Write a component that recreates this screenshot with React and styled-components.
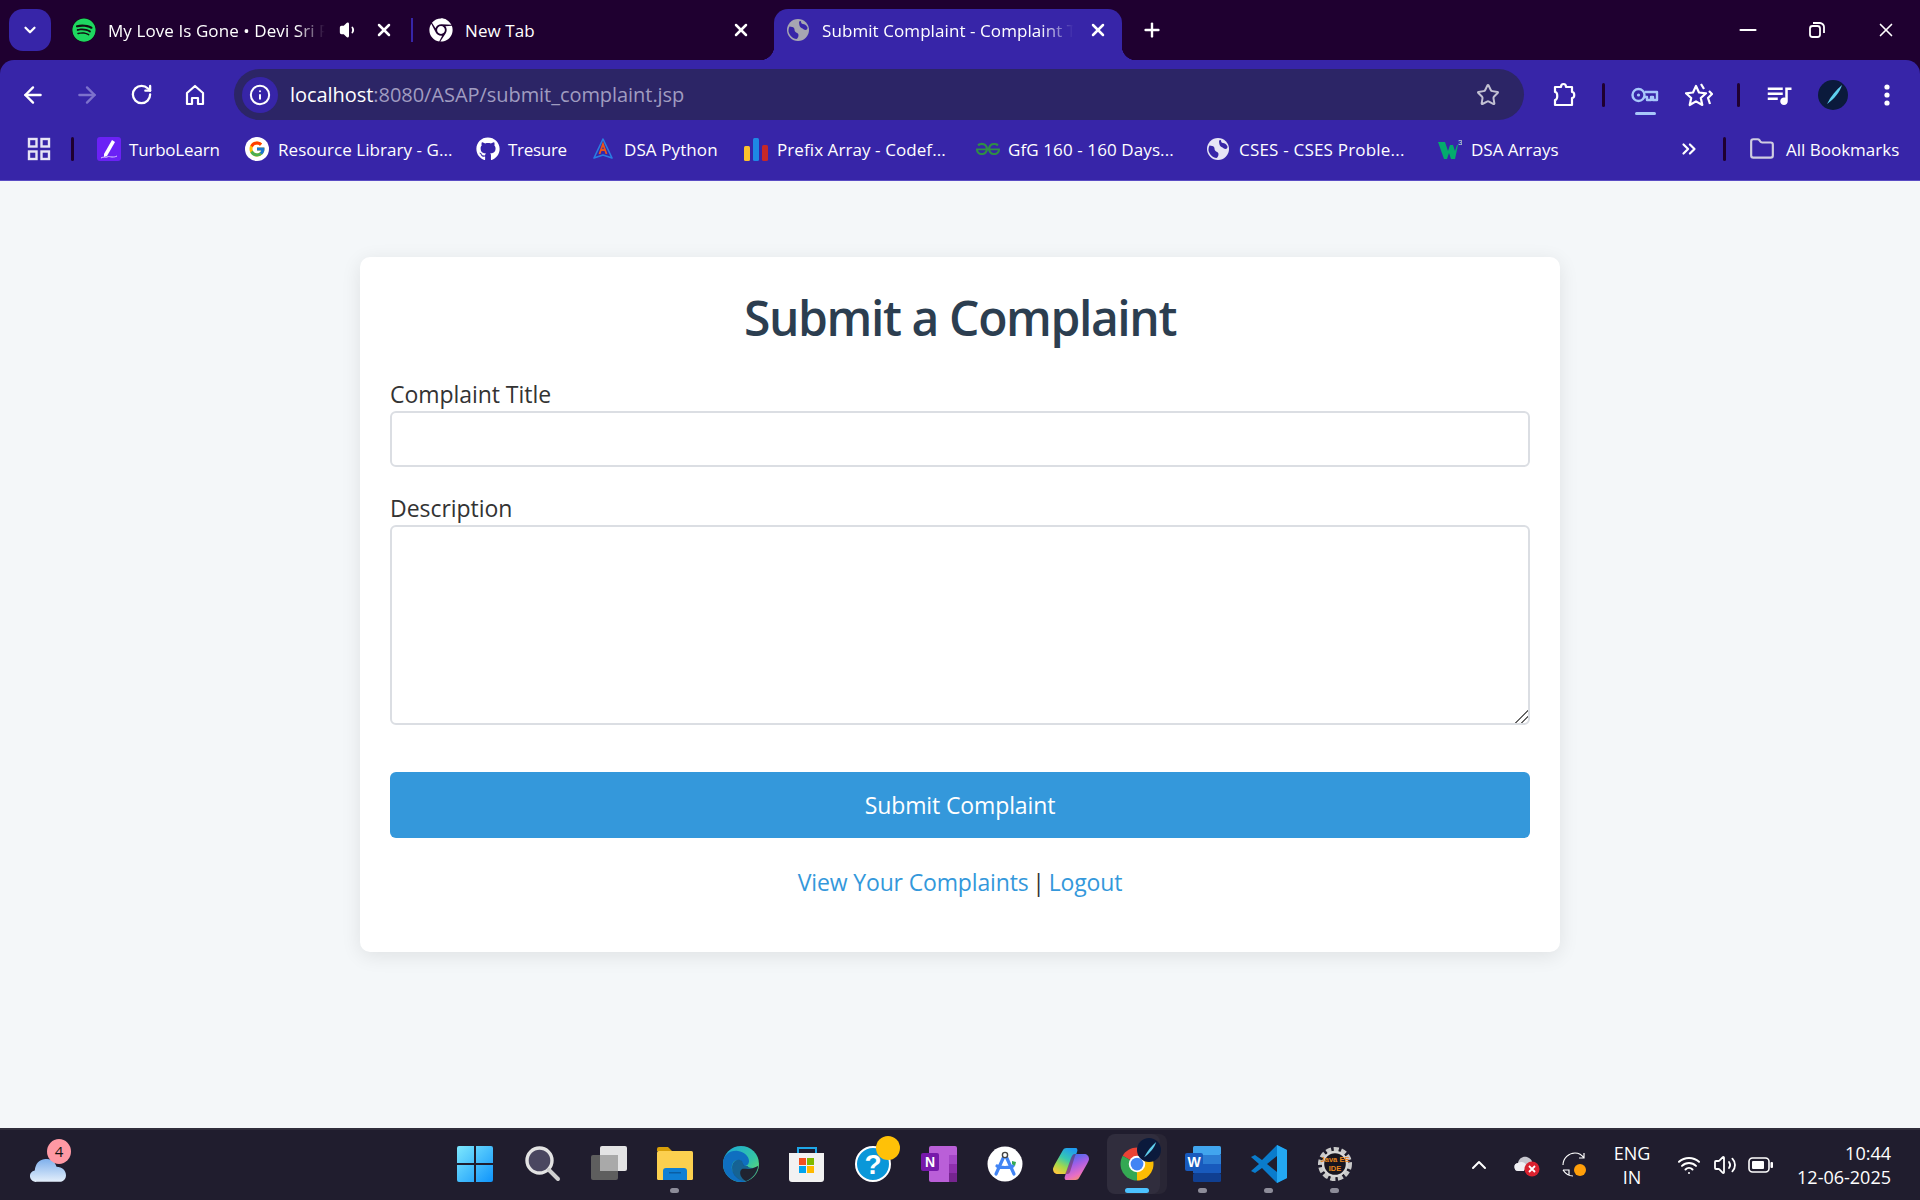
import styled, { createGlobalStyle } from 'styled-components';
import {
  ArrowLeft, ArrowRight, RotateCw, Info, Star, X, Plus, Minus, ChevronDown, ChevronUp,
  ChevronsRight, Folder, Volume1, Volume2, Wifi,
} from 'lucide-react';
import { FaChrome, FaGithub, FaSpotify } from 'react-icons/fa';
import { FcGoogle } from 'react-icons/fc';
import { MdOutlineQueueMusic } from 'react-icons/md';
import { SiGeeksforgeeks } from 'react-icons/si';

const UI_FONT = '"Open Sans", "Noto Sans", sans-serif';

const GlobalStyle = createGlobalStyle`
  * { box-sizing: border-box; }
  html, body { margin: 0; padding: 0; height: 100%; }
  body { font-family: ${UI_FONT}; background: #1f0030; }
`;

const Screen = styled.div`
  width: 1920px;
  height: 1200px;
  display: flex;
  flex-direction: column;
  overflow: hidden;
  background: #1f0030;
`;

/* ---------- tab strip ---------- */

const TabStrip = styled.div`
  height: 60px;
  display: flex;
  align-items: flex-end;
  padding-left: 9px;
  color: #fff;
`;

const TabSearch = styled.div`
  width: 42px;
  height: 42px;
  margin: 0 9px 9px 0;
  border-radius: 14px;
  background: #3725a8;
  display: flex;
  align-items: center;
  justify-content: center;
`;

const Tab = styled.div`
  position: relative;
  width: ${(p) => p.$width}px;
  height: 51px;
  margin-right: ${(p) => p.$gap || 0}px;
  padding: 0 ${(p) => p.$right}px 9px ${(p) => p.$left}px;
  display: flex;
  align-items: center;
  gap: 12px;
  border-radius: 14px 14px 0 0;
  background: ${(p) => (p.$active ? '#3725a8' : 'transparent')};

  ${(p) => p.$active && `
    &::before, &::after {
      content: "";
      position: absolute;
      bottom: 0;
      width: 14px;
      height: 14px;
    }
    &::before { left: -14px; background: radial-gradient(circle at 0 0, transparent 14px, #3725a8 14.5px); }
    &::after { right: -14px; background: radial-gradient(circle at 100% 0, transparent 14px, #3725a8 14.5px); }
  `}
`;

const TabTitle = styled.span`
  flex: 1;
  min-width: 0;
  font-size: 17px;
  letter-spacing: 0.08px;
  white-space: nowrap;
  overflow: hidden;
  mask-image: ${(p) => (p.$fade ? 'linear-gradient(to right, #000 86%, transparent 99%)' : 'none')};
`;

const TabDivider = styled.div`
  width: 2px;
  height: 24px;
  margin: 0 1px 18px;
  background: #3725a8;
`;

const NewTab = styled.div`
  width: 24px;
  height: 24px;
  margin: 0 0 18px 18px;
  display: flex;
  align-items: center;
  justify-content: center;
`;

const WindowControls = styled.div`
  margin-left: auto;
  align-self: flex-start;
  display: flex;
`;

const WindowButton = styled.div`
  width: 69px;
  height: 60px;
  display: flex;
  align-items: center;
  justify-content: center;
`;

/* ---------- toolbar ---------- */

const Toolbar = styled.div`
  height: 60px;
  padding: 9px 6px 0;
  display: flex;
  align-items: center;
  background: #3725a8;
  border-radius: 14px 14px 0 0;
  color: #fff;
`;

const ToolButton = styled.div`
  width: 54px;
  height: 51px;
  position: relative;
  flex-shrink: 0;
  display: flex;
  align-items: center;
  justify-content: center;
  color: ${(p) => p.$color || '#fff'};
`;

const KeyUnderline = styled.span`
  position: absolute;
  left: 17px;
  bottom: 5px;
  width: 21px;
  height: 3px;
  border-radius: 2px;
  background: #a8c7fa;
`;

const Omnibox = styled.div`
  width: 1290px;
  height: 51px;
  margin: 0 13px 0 12px;
  padding: 0 24px 0 8px;
  flex-shrink: 0;
  display: flex;
  align-items: center;
  border-radius: 26px;
  background: #2c2566;
`;

const SiteInfo = styled.div`
  width: 36px;
  height: 36px;
  margin-right: 12px;
  border-radius: 50%;
  background: #3725a8;
  display: flex;
  align-items: center;
  justify-content: center;
`;

const Url = styled.div`
  flex: 1;
  font-size: 20px;
  letter-spacing: -0.05px;
  color: #a09cc0;

  b { font-weight: 400; color: #fff; }
`;

const ToolDivider = styled.div`
  width: 3px;
  height: 24px;
  margin: 0 ${(p) => p.$right || 12}px 0 ${(p) => p.$left || 12}px;
  flex-shrink: 0;
  border-radius: 2px;
  background: #1f0030;
`;

const Avatar = styled.div`
  width: ${(p) => p.$size}px;
  height: ${(p) => p.$size}px;
  border-radius: 50%;
  overflow: hidden;
  background: #0b1a3c;
`;

/* ---------- bookmarks ---------- */

const BookmarksBar = styled.div`
  height: 61px;
  padding: 0 0 2px 27px;
  display: flex;
  align-items: center;
  background: #3725a8;
  border-bottom: 1px solid #5a4cc4;
  color: #fff;
`;

const BarDivider = styled.div`
  width: 3px;
  height: 24px;
  margin: 0 ${(p) => p.$right}px 0 ${(p) => p.$left}px;
  flex-shrink: 0;
  border-radius: 2px;
  background: #1f0030;
`;

const Bookmark = styled.div`
  width: ${(p) => p.$width}px;
  flex-shrink: 0;
  display: flex;
  align-items: center;
  gap: ${(p) => p.$gap || 9}px;
  font-size: 17px;
  letter-spacing: ${(p) => p.$spacing || 0}px;
  white-space: nowrap;

  svg { flex-shrink: 0; }
`;

const Overflow = styled.div`
  width: 24px;
  margin-left: 109px;
  flex-shrink: 0;
  display: flex;
  justify-content: center;
`;

/* ---------- page ---------- */

const Page = styled.main`
  flex: 1;
  padding-top: 76px;
  background: #f4f7f9;
`;

const Card = styled.div`
  width: 1200px;
  margin: 0 auto;
  padding: 30px 30px 55px;
  background: #fff;
  border-radius: 10px;
  box-shadow: 0 4px 20px rgba(0, 0, 0, 0.09);
`;

const Heading = styled.h2`
  margin: 0 0 34px;
  font-size: 48px;
  line-height: 62px;
  font-weight: 600;
  text-align: center;
  letter-spacing: -1.4px;
  color: #2c3e50;
`;

const Field = styled.div`
  margin-bottom: ${(p) => p.$gap}px;
`;

const Label = styled.label`
  display: block;
  margin-bottom: 6px;
  font-size: 23px;
  line-height: 22px;
  letter-spacing: -0.05px;
  color: #333;
`;

const TextInput = styled.input`
  display: block;
  width: 100%;
  height: 56px;
  background: #fff;
  border: 2px solid #dbdee3;
  border-radius: 6px;
  outline: none;
`;

const TextArea = styled.textarea`
  display: block;
  width: 100%;
  height: 200px;
  background: #fff;
  border: 2px solid #dbdee3;
  border-radius: 6px;
  outline: none;
  resize: vertical;

  &::-webkit-resizer {
    background: linear-gradient(135deg, transparent 55%, #666 55%, #666 62%, transparent 62%, transparent 75%, #666 75%, #666 82%, transparent 82%);
  }
`;

const SubmitButton = styled.button`
  display: block;
  width: 100%;
  height: 66px;
  border: none;
  border-radius: 6px;
  background: #3498db;
  color: #fff;
  font-family: ${UI_FONT};
  font-size: 23px;
  letter-spacing: -0.12px;
`;

const Links = styled.p`
  margin: 29px 0 0;
  font-size: 23px;
  line-height: 30px;
  text-align: center;
  letter-spacing: -0.15px;
  color: #333;

  a { color: #3498db; text-decoration: none; }
`;

const Pipe = styled.span`
  margin: 0 -2px;
`;

/* ---------- taskbar ---------- */

const Taskbar = styled.footer`
  height: 72px;
  display: flex;
  align-items: center;
  background: #201d2e;
  border-top: 2px solid #302e3c;
  color: #fff;
`;

const Widgets = styled.div`
  width: 442px;
  padding-left: 30px;
  flex-shrink: 0;
`;

const WeatherIcon = styled.div`
  position: relative;
  width: 36px;
  height: 25px;
  margin-top: 8px;
`;

const WeatherBadge = styled.span`
  position: absolute;
  left: 17px;
  top: -18px;
  width: 24px;
  height: 25px;
  border-radius: 50%;
  background: #ff99a4;
  color: #111;
  font-size: 15px;
  line-height: 25px;
  text-align: center;
`;

const TaskIcons = styled.div`
  display: flex;
  align-items: center;
`;

const TaskSlot = styled.div`
  position: relative;
  isolation: isolate;
  width: 66px;
  height: 60px;
  margin-bottom: 2px;
  display: flex;
  align-items: center;
  justify-content: center;

  &:first-child { margin-right: 2px; }

  ${(p) => p.$active && `
    &::before, &::after {
      content: "";
      position: absolute;
      top: 0;
      bottom: 0;
      width: 53px;
      border-radius: 8px;
    }
    &::before { left: 3px; background: #302d3d; z-index: -1; }
    &::after { left: 10px; background: #292635; z-index: -2; }
  `}
`;

const RunDot = styled.span`
  position: absolute;
  bottom: 1px;
  left: 50%;
  width: ${(p) => (p.$active ? 24 : 9)}px;
  height: 5px;
  margin-left: ${(p) => (p.$active ? -12 : -5)}px;
  border-radius: 3px;
  background: ${(p) => (p.$active ? '#4cc2ff' : '#8d8c99')};
`;

const SlotBadge = styled.div`
  position: absolute;
  left: ${(p) => p.$left}px;
  top: ${(p) => p.$top}px;
`;

const Dot = styled.div`
  width: 24px;
  height: 24px;
  border-radius: 50%;
  background: #ffc107;
`;

const Tray = styled.div`
  margin-left: auto;
  padding-right: 29px;
  display: flex;
  align-items: center;
`;

const TrayIcon = styled.div`
  width: ${(p) => p.$width}px;
  flex-shrink: 0;
  display: flex;
  justify-content: center;
`;

const TrayText = styled.div`
  width: ${(p) => p.$width}px;
  font-size: 18px;
  line-height: 24px;
  text-align: ${(p) => p.$align};
  white-space: nowrap;
`;

/* ---------- drawn icons ---------- */

const Globe = ({ color = '#a6a6b2', cut = '#3725a8', size = 24 }) => (
  <svg width={size} height={size} viewBox="0 0 24 24">
    <circle cx="12" cy="12" r="11" fill={color} />
    <path d="M3.500 8.500c2 .5 3.500 0 4.500 1.500s0 2.500 1.500 4 3 1 3 3-1 3.500-2 4c-4-.5-7-3.500-8-7.500 0-2 .2-3.500 1-5zM15 3c0 2 .5 3 2 3s3 .5 4.500 3.500c0 1.500-.5 2.500-2 2.500s-2.500-1.500-4-2-2.500-3-2.500-6.500c.8-.3 1.500-.5 2-.5z" fill={cut} />
  </svg>
);

const HomeIcon = () => (
  <svg width="24" height="24" viewBox="0 0 24 24" fill="none" stroke="#fff" strokeWidth="2.2">
    <path d="M4 21V10l8-7 8 7v11h-5v-6H9v6z" strokeLinejoin="round" />
  </svg>
);

const ExtensionIcon = () => (
  <svg width="26" height="26" viewBox="0 0 26 26" fill="none" stroke="#fff" strokeWidth="2.2" strokeLinejoin="round">
    <path d="M4 5h6c0-4 5-4 5 0h6v5c3 0 3 6 0 6v7H4v-5c3 0 3-8 0-8z" />
  </svg>
);

const KeyIcon = () => (
  <svg width="28" height="18" viewBox="0 0 28 18" fill="none" stroke="#a8c7fa" strokeWidth="2.4">
    <circle cx="7.5" cy="9" r="6" />
    <circle cx="7.5" cy="9" r="1.6" fill="#a8c7fa" stroke="none" />
    <path d="M13.5 6H26v8h-4v-3h-2v3h-4v-3h-2.5" strokeLinejoin="round" />
  </svg>
);

const SparkStar = () => (
  <svg width="28" height="26" viewBox="0 0 28 26" fill="none" stroke="#fff" strokeWidth="2.2" strokeLinejoin="round">
    <path d="M11 4l3 6.500 7 .8-5.200 4.700 1.500 7L11 19.400 4.700 23l1.500-7L1 11.300l7-.8z" />
    <path d="M16 2l3 5M24 9l3 3-4 4 2 6" />
  </svg>
);

const Restore = () => (
  <svg width="18" height="18" viewBox="0 0 18 18" fill="none" stroke="#fff" strokeWidth="1.8">
    <rect x="2" y="5" width="10" height="11" rx="2.5" />
    <path d="M5 2h7c2 0 4 2 4 4v6" />
  </svg>
);

const AppsIcon = () => (
  <svg width="24" height="24" viewBox="0 0 24 24" fill="none" stroke="#e6e4f5" strokeWidth="2.4">
    <rect x="2" y="2" width="7.500" height="7.500" />
    <rect x="14.500" y="2" width="7.500" height="7.500" />
    <rect x="2" y="14.500" width="7.500" height="7.500" />
    <rect x="14.500" y="14.500" width="7.500" height="7.500" />
  </svg>
);

const TurboIcon = () => (
  <svg width="24" height="24" viewBox="0 0 24 24">
    <rect width="24" height="24" rx="3" fill="#6b21f5" />
    <path d="M7 17L15 3l3 2-8 14-3 1z" fill="#fff" />
    <path d="M4 21c3-2 4 0 6-1s3 0 5 0 3 0 5-1" fill="none" stroke="#d8c8ff" strokeWidth="1" />
  </svg>
);

const PythonA = () => (
  <svg width="24" height="24" viewBox="0 0 24 24" fill="none">
    <path d="M12 2L3 21l9-3 9 3z" stroke="#2a7de1" strokeWidth="1.600" strokeLinejoin="round" />
    <path d="M8.500 17L12 7l3.500 10M10 13h4" stroke="#e8541c" strokeWidth="1.800" />
  </svg>
);

const BarsIcon = () => (
  <svg width="24" height="24" viewBox="0 0 24 24">
    <rect x="0" y="9" width="6" height="15" rx="1.500" fill="#fbc02d" />
    <rect x="9" y="1" width="6" height="23" rx="1.500" fill="#1e88e5" />
    <rect x="18" y="8" width="6" height="16" rx="1.500" fill="#c62828" />
  </svg>
);

const W3Icon = () => (
  <svg width="24" height="24" viewBox="0 0 24 24">
    <path d="M0 5h7l3 9 2-6h3l2 6 2-6h1l-3 14h-4l-2-6-2 6H6z" fill="#04aa6d" />
    <text x="20" y="8" fontSize="8" fontFamily="Liberation Sans, sans-serif" fill="#cfe8dd">3</text>
  </svg>
);

const WinLogo = () => (
  <svg width="36" height="36" viewBox="0 0 36 36">
    <defs>
      <linearGradient id="win" x1="0" y1="0" x2="1" y2="1">
        <stop offset="0" stopColor="#7ee8fd" />
        <stop offset="1" stopColor="#0f94fb" />
      </linearGradient>
    </defs>
    <path d="M0 2a2 2 0 0 1 2-2h15v17H0zM19 0h15a2 2 0 0 1 2 2v15H19zM0 19h17v17H2a2 2 0 0 1-2-2zM19 19h17v15a2 2 0 0 1-2 2H19z" fill="url(#win)" />
  </svg>
);

const SearchLogo = () => (
  <svg width="36" height="36" viewBox="0 0 36 36">
    <circle cx="14.500" cy="14.500" r="12.500" fill="#4a4760" stroke="#e3e3e3" strokeWidth="3.400" />
    <path d="M24 24l9 9" stroke="#d0d0d0" strokeWidth="4" strokeLinecap="round" />
  </svg>
);

const TaskViewLogo = () => (
  <svg width="36" height="36" viewBox="0 0 36 36">
    <rect x="0" y="9" width="27" height="25" rx="2" fill="#5e5e5e" />
    <rect x="9" y="0" width="27" height="25" rx="2" fill="#f4f4f4" fillOpacity="0.92" />
    <rect x="9" y="9" width="18" height="16" fill="#a9a9a9" />
  </svg>
);

const FilesLogo = () => (
  <svg width="36" height="36" viewBox="0 0 36 36">
    <path d="M0 3a2 2 0 0 1 2-2h9l4 4H0z" fill="#d89f08" />
    <rect y="5" width="36" height="29" rx="1.500" fill="#fcd04f" />
    <path d="M6 34V25a3 3 0 0 1 3-3h18a3 3 0 0 1 3 3v9z" fill="#0f7fd4" />
    <rect x="12" y="26" width="12" height="1.500" fill="#0a5ea3" />
  </svg>
);

const EdgeLogo = () => (
  <svg width="36" height="36" viewBox="0 0 36 36">
    <defs>
      <linearGradient id="edge" x1="0" y1="0" x2="1" y2="1">
        <stop offset="0" stopColor="#1ba8d8" />
        <stop offset="0.6" stopColor="#34c6a4" />
        <stop offset="1" stopColor="#7ee25a" />
      </linearGradient>
    </defs>
    <circle cx="18" cy="18" r="18" fill="url(#edge)" />
    <path d="M0 18C0 8 8 4 15 5c6 1 11 5 11 10 0 3-2 5-5 5-2 0 0-5-5-6-6-1-9 6-6 12 2 5 8 9 14 9-2 1-5 1-6 1-10 0-18-8-18-18z" fill="#0f6fc0" />
    <path d="M9 22c0-6 4-9 8-8 4 1 2 6 6 6h2c-1 2 7 3 10 0 0 5-4 12-11 15-7 1-15-5-15-13z" fill="#12528f" fillOpacity="0.85" />
    <path d="M19 23c3-1 7 2 16-3-1 6-5 12-12 15-5-2-8-9-4-12z" fill="#20232f" />
  </svg>
);

const StoreLogo = () => (
  <svg width="36" height="36" viewBox="0 0 36 36">
    <path d="M9 8V2h18v6" fill="none" stroke="#1ea7e8" strokeWidth="2" />
    <path d="M0 7h35v26a3 3 0 0 1-3 3H3a3 3 0 0 1-3-3z" fill="#f2f2f2" />
    <rect x="10" y="12" width="7" height="7" fill="#f25022" />
    <rect x="18" y="12" width="7" height="7" fill="#7fba00" />
    <rect x="10" y="20" width="7" height="7" fill="#00a4ef" />
    <rect x="18" y="20" width="7" height="7" fill="#ffb900" />
  </svg>
);

const HelpLogo = () => (
  <svg width="36" height="36" viewBox="0 0 36 36">
    <circle cx="18" cy="18" r="17" fill="#0a97d9" stroke="#fff" strokeWidth="2" />
    <text x="18" y="28" textAnchor="middle" fontSize="28" fontWeight="700" fontFamily="Liberation Sans, sans-serif" fill="#fff">?</text>
  </svg>
);

const OneNoteLogo = () => (
  <svg width="36" height="36" viewBox="0 0 36 36">
    <rect x="8" y="0" width="28" height="36" rx="2" fill="#ba5fd8" />
    <rect x="28" y="9" width="8" height="9" fill="#a447c6" />
    <rect x="28" y="18" width="8" height="9" fill="#8f30ad" />
    <rect x="28" y="27" width="8" height="9" fill="#76258f" />
    <rect x="0" y="7" width="18" height="18" rx="2" fill="#7719aa" />
    <text x="9" y="21" textAnchor="middle" fontSize="14" fontWeight="700" fontFamily="Liberation Sans, sans-serif" fill="#fff">N</text>
  </svg>
);

const AndroidStudioLogo = () => (
  <svg width="36" height="36" viewBox="0 0 36 36">
    <circle cx="18" cy="18" r="17.500" fill="#fff" />
    <path d="M18 8L9 28M18 8l9 20M10 20c4 2 12 2 16 0" fill="none" stroke="#4285f4" strokeWidth="3.200" strokeLinecap="round" />
    <circle cx="18" cy="9" r="2.600" fill="#fff" stroke="#444" strokeWidth="1.400" />
    <path d="M25 15l4 1-1 4-3-2z" fill="#34a853" />
  </svg>
);

const CopilotLogo = () => (
  <svg width="36" height="32" viewBox="0 0 36 32">
    <defs>
      <linearGradient id="copA" x1="0.7" y1="0" x2="0.2" y2="1">
        <stop offset="0" stopColor="#1f9cf0" />
        <stop offset="0.4" stopColor="#37c8b0" />
        <stop offset="0.7" stopColor="#a5d84a" />
        <stop offset="1" stopColor="#ffc83d" />
      </linearGradient>
      <linearGradient id="copB" x1="0.3" y1="0" x2="0.7" y2="1">
        <stop offset="0" stopColor="#3a6ff0" />
        <stop offset="0.4" stopColor="#a45fe6" />
        <stop offset="0.75" stopColor="#e86ec4" />
        <stop offset="1" stopColor="#f79a5b" />
      </linearGradient>
    </defs>
    <path d="M10 2c1-2 3-2 5-2h8c1 0 2 2 1 4l-7 20c-1 2-2 2-4 2H5c-3 0-5-2-5-5 0-1 1-3 2-5z" fill="url(#copA)" />
    <path d="M26 30c-1 2-3 2-5 2h-8c-1 0-2-2-1-4l7-20c1-2 2-2 4-2h8c3 0 5 2 5 5 0 1-1 3-2 5z" fill="url(#copB)" />
    <path d="M17 24c-1 2-2 2-4 2h-1l1-2 5-14c1-2 2-4 4-4h1l-1 2z" fill="#5a2a30" fillOpacity="0.45" />
  </svg>
);

const ChromeLogo = () => (
  <svg width="36" height="36" viewBox="0 0 48 48">
    <path d="M24 24L4.950 13A22 22 0 0 1 43.050 13z" fill="#ea4335" />
    <path d="M24 24L43.050 13A22 22 0 0 1 24 46z" fill="#fbbc04" />
    <path d="M24 24L24 46A22 22 0 0 1 4.950 13z" fill="#34a853" />
    <circle cx="24" cy="24" r="11" fill="#fff" />
    <circle cx="24" cy="24" r="8.500" fill="#4285f4" />
  </svg>
);

const WordLogo = () => (
  <svg width="36" height="36" viewBox="0 0 36 36">
    <rect x="8" y="0" width="28" height="9" rx="1.500" fill="#41a5ee" />
    <rect x="8" y="9" width="28" height="9" fill="#2b7cd3" />
    <rect x="8" y="18" width="28" height="9" fill="#185abd" />
    <rect x="8" y="27" width="28" height="9" rx="1.500" fill="#103f91" />
    <rect x="0" y="7" width="18" height="18" rx="2" fill="#185abd" />
    <text x="9" y="21" textAnchor="middle" fontSize="14" fontWeight="700" fontFamily="Liberation Sans, sans-serif" fill="#fff">W</text>
  </svg>
);

const VsCodeLogo = () => (
  <svg width="38" height="38" viewBox="0 0 38 38">
    <path d="M27 0l10 5v28l-10 5-15-15-7 5-4-2 8-7-8-7 4-2 7 5z" fill="#0a7ccc" />
    <path d="M27 0l10 5v28l-10 5z" fill="#23a8f2" />
    <path d="M27 11v16l-10-8z" fill="#201d2e" />
  </svg>
);

const JavaEeLogo = () => (
  <svg width="36" height="36" viewBox="0 0 36 36">
    <circle cx="18" cy="18" r="14.500" fill="#17151f" stroke="#c9c9c9" strokeWidth="5" strokeDasharray="5 2.400" />
    <circle cx="18" cy="18" r="12" fill="none" stroke="#d6d6d6" strokeWidth="2.400" />
    <text x="18" y="16" textAnchor="middle" fontSize="7.500" fontWeight="700" fontFamily="Liberation Sans, sans-serif" fill="#e8861c">Java EE</text>
    <text x="18" y="25" textAnchor="middle" fontSize="7.500" fontWeight="700" fontFamily="Liberation Sans, sans-serif" fill="#e8861c">IDE</text>
  </svg>
);

const CloudLogo = () => (
  <svg width="36" height="25" viewBox="0 0 38 26">
    <defs>
      <linearGradient id="cloud" x1="0" y1="0" x2="0" y2="1">
        <stop offset="0" stopColor="#7fb0ec" />
        <stop offset="1" stopColor="#e4effb" />
      </linearGradient>
    </defs>
    <path d="M7 26a6 6 0 0 1-2-12c1-7 4-11 11-12 6-1 10 2 12 8 6 0 10 4 10 9 0 4-3 7-7 7z" fill="url(#cloud)" />
  </svg>
);

const CometAvatar = ({ size }) => (
  <Avatar $size={size}>
    <svg width={size} height={size} viewBox="0 0 30 30">
      <path d="M9 24C13 16 18 10 24 5c-2 7-8 14-15 19z" fill="#5fd0ef" />
    </svg>
  </Avatar>
);

const OneDriveOff = () => (
  <svg width="26" height="24" viewBox="0 0 26 24">
    <path d="M5 18a4 4 0 0 1-1-8c1-5 5-7 9-6 3 1 5 3 5 5 3 0 4 2 3 5z" fill="#c7c7cf" />
    <path d="M5 18a4 4 0 0 1-1-8c3-2 7-1 8 2l-2 6z" fill="#f0f0f4" />
    <circle cx="18" cy="16" r="7.500" fill="#d9222f" />
    <path d="M15 13l6 6M21 13l-6 6" stroke="#fff" strokeWidth="1.800" />
  </svg>
);

const SyncIcon = () => (
  <svg width="26" height="26" viewBox="0 0 26 26" fill="none" stroke="#fff" strokeWidth="1.200">
    <path d="M1 13C1 6 7 1 13 1c4 0 7 2 9 5M22 1v5h-5M1 18h6v5M1 18c2 3 5 6 10 6" />
    <circle cx="18" cy="18" r="6" fill="#ff9f0a" stroke="none" />
  </svg>
);

const BatteryIcon = () => (
  <svg width="26" height="18" viewBox="0 0 26 18" fill="none">
    <rect x="1" y="2" width="20" height="14" rx="3.500" stroke="#fff" strokeWidth="1.600" />
    <rect x="4" y="5" width="12" height="8" rx="1" fill="#fff" />
    <rect x="22.500" y="6" width="2.500" height="6" rx="1" fill="#fff" />
  </svg>
);

const bookmarks = [
  { title: 'TurboLearn', width: 148, gap: 8, spacing: -0.2, icon: <TurboIcon /> },
  { title: 'Resource Library - G...', width: 231, gap: 9, spacing: 0.05, icon: <FcGoogle size={24} style={{ background: '#fff', borderRadius: '50%', padding: 3 }} /> },
  { title: 'Tresure', width: 115, gap: 8, spacing: -0.3, icon: <FaGithub size={24} /> },
  { title: 'DSA Python', width: 153, icon: <PythonA />, spacing: 0.1 },
  { title: 'Prefix Array - Codef...', width: 232, gap: 9, spacing: 0.08, icon: <BarsIcon /> },
  { title: 'GfG 160 - 160 Days...', width: 230, gap: 8, spacing: 0.1, icon: <SiGeeksforgeeks size={24} color="#2f8d46" /> },
  { title: 'CSES - CSES Proble...', width: 232, gap: 9, spacing: 0.2, icon: <Globe color="#e6e4f5" /> },
];

const taskApps = [
  { name: 'start', logo: <WinLogo /> },
  { name: 'search', logo: <SearchLogo /> },
  { name: 'taskview', logo: <TaskViewLogo /> },
  { name: 'files', logo: <FilesLogo />, running: true },
  { name: 'edge', logo: <EdgeLogo /> },
  { name: 'store', logo: <StoreLogo /> },
  { name: 'help', logo: <HelpLogo />, badge: <Dot />, left: 36, top: 2 },
  { name: 'onenote', logo: <OneNoteLogo /> },
  { name: 'android', logo: <AndroidStudioLogo /> },
  { name: 'copilot', logo: <CopilotLogo /> },
  { name: 'chrome', logo: <ChromeLogo />, active: true, running: true, badge: <CometAvatar size={24} />, left: 33, top: 4 },
  { name: 'word', logo: <WordLogo />, running: true },
  { name: 'vscode', logo: <VsCodeLogo />, running: true },
  { name: 'javaee', logo: <JavaEeLogo />, running: true },
];

const App = () => {
  return (
    <Screen>
      <GlobalStyle />

      <TabStrip>
        <TabSearch><ChevronDown size={18} strokeWidth={3} /></TabSearch>
        <Tab $width={350} $left={12} $right={14}>
          <FaSpotify size={24} color="#1ed760" style={{ background: '#111', borderRadius: '50%' }} />
          <TabTitle $fade>My Love Is Gone • Devi Sri Prasad</TabTitle>
          <Volume1 size={20} fill="#fff" />
          <X size={20} strokeWidth={3} style={{ margin: '0 2px 0 3px' }} />
        </Tab>
        <TabDivider />
        <Tab $width={356} $left={15} $right={17} $gap={4}>
          <FaChrome size={24} />
          <TabTitle>New Tab</TabTitle>
          <X size={20} strokeWidth={3} style={{ margin: '0 2px' }} />
        </Tab>
        <Tab $active $width={348} $left={12} $right={14}>
          <Globe />
          <TabTitle $fade>Submit Complaint - Complaint Tracker</TabTitle>
          <X size={20} strokeWidth={3} />
        </Tab>
        <NewTab><Plus size={22} strokeWidth={2.6} /></NewTab>
        <WindowControls>
          <WindowButton><Minus size={26} strokeWidth={1.8} /></WindowButton>
          <WindowButton><Restore /></WindowButton>
          <WindowButton><X size={22} strokeWidth={1.8} /></WindowButton>
        </WindowControls>
      </TabStrip>

      <Toolbar>
        <ToolButton><ArrowLeft size={26} strokeWidth={2.2} /></ToolButton>
        <ToolButton $color="#7d72cc"><ArrowRight size={26} strokeWidth={2.2} /></ToolButton>
        <ToolButton><RotateCw size={23} strokeWidth={2.4} /></ToolButton>
        <ToolButton><HomeIcon /></ToolButton>
        <Omnibox>
          <SiteInfo><Info size={22} color="#fff" strokeWidth={2.2} /></SiteInfo>
          <Url><b>localhost</b>:8080/ASAP/submit_complaint.jsp</Url>
          <Star size={24} color="#c2c0d2" strokeWidth={2} />
        </Omnibox>
        <ToolButton><ExtensionIcon /></ToolButton>
        <ToolDivider $left={11} $right={13} />
        <ToolButton><KeyIcon /><KeyUnderline /></ToolButton>
        <ToolButton><SparkStar /></ToolButton>
        <ToolDivider $left={11} $right={12} />
        <ToolButton><MdOutlineQueueMusic size={30} /></ToolButton>
        <ToolButton><CometAvatar size={30} /></ToolButton>
        <ToolButton>
          <svg width="6" height="24" viewBox="0 0 6 24" fill="#fff">
            <circle cx="3" cy="4" r="2.600" /><circle cx="3" cy="12" r="2.600" /><circle cx="3" cy="20" r="2.600" />
          </svg>
        </ToolButton>
      </Toolbar>

      <BookmarksBar>
        <AppsIcon />
        <BarDivider $left={20} $right={23} />
        {bookmarks.map((b) => (
          <Bookmark key={b.title} $width={b.width} $gap={b.gap} $spacing={b.spacing}>
            {b.icon}
            <span>{b.title}</span>
          </Bookmark>
        ))}
        <Bookmark $width={130} $gap={9}>
          <W3Icon />
          <span>DSA Arrays</span>
        </Bookmark>
        <Overflow><ChevronsRight size={22} strokeWidth={2.4} /></Overflow>
        <BarDivider $left={22} $right={23} />
        <Bookmark $width={150} $gap={11}>
          <Folder size={26} color="#cfcde0" strokeWidth={2} />
          <span>All Bookmarks</span>
        </Bookmark>
      </BookmarksBar>

      <Page>
        <Card>
          <Heading>Submit a Complaint</Heading>
          <form onSubmit={(e) => e.preventDefault()}>
            <Field $gap={30}>
              <Label htmlFor="title">Complaint Title</Label>
              <TextInput id="title" type="text" />
            </Field>
            <Field $gap={47}>
              <Label htmlFor="description">Description</Label>
              <TextArea id="description" />
            </Field>
            <SubmitButton type="submit">Submit Complaint</SubmitButton>
          </form>
          <Links><a href="#">View Your Complaints</a> <Pipe>|</Pipe> <a href="#">Logout</a></Links>
        </Card>
      </Page>

      <Taskbar>
        <Widgets>
          <WeatherIcon>
            <CloudLogo />
            <WeatherBadge>4</WeatherBadge>
          </WeatherIcon>
        </Widgets>
        <TaskIcons>
          {taskApps.map((app) => (
            <TaskSlot key={app.name} $active={app.active}>
              {app.logo}
              {app.badge && <SlotBadge $left={app.left} $top={app.top}>{app.badge}</SlotBadge>}
              {app.running && <RunDot $active={app.active} />}
            </TaskSlot>
          ))}
        </TaskIcons>
        <Tray>
          <TrayIcon $width={48}><ChevronUp size={24} strokeWidth={2} /></TrayIcon>
          <TrayIcon $width={48}><OneDriveOff /></TrayIcon>
          <TrayIcon $width={48}><SyncIcon /></TrayIcon>
          <TrayText $width={66} $align="center">ENG<br />IN</TrayText>
          <TrayIcon $width={48}><Wifi size={24} strokeWidth={2} /></TrayIcon>
          <TrayIcon $width={24}><Volume2 size={24} strokeWidth={1.8} /></TrayIcon>
          <TrayIcon $width={48}><BatteryIcon /></TrayIcon>
          <TrayText $width={106} $align="right">10:44<br />12-06-2025</TrayText>
        </Tray>
      </Taskbar>
    </Screen>
  );
};

export default App;
